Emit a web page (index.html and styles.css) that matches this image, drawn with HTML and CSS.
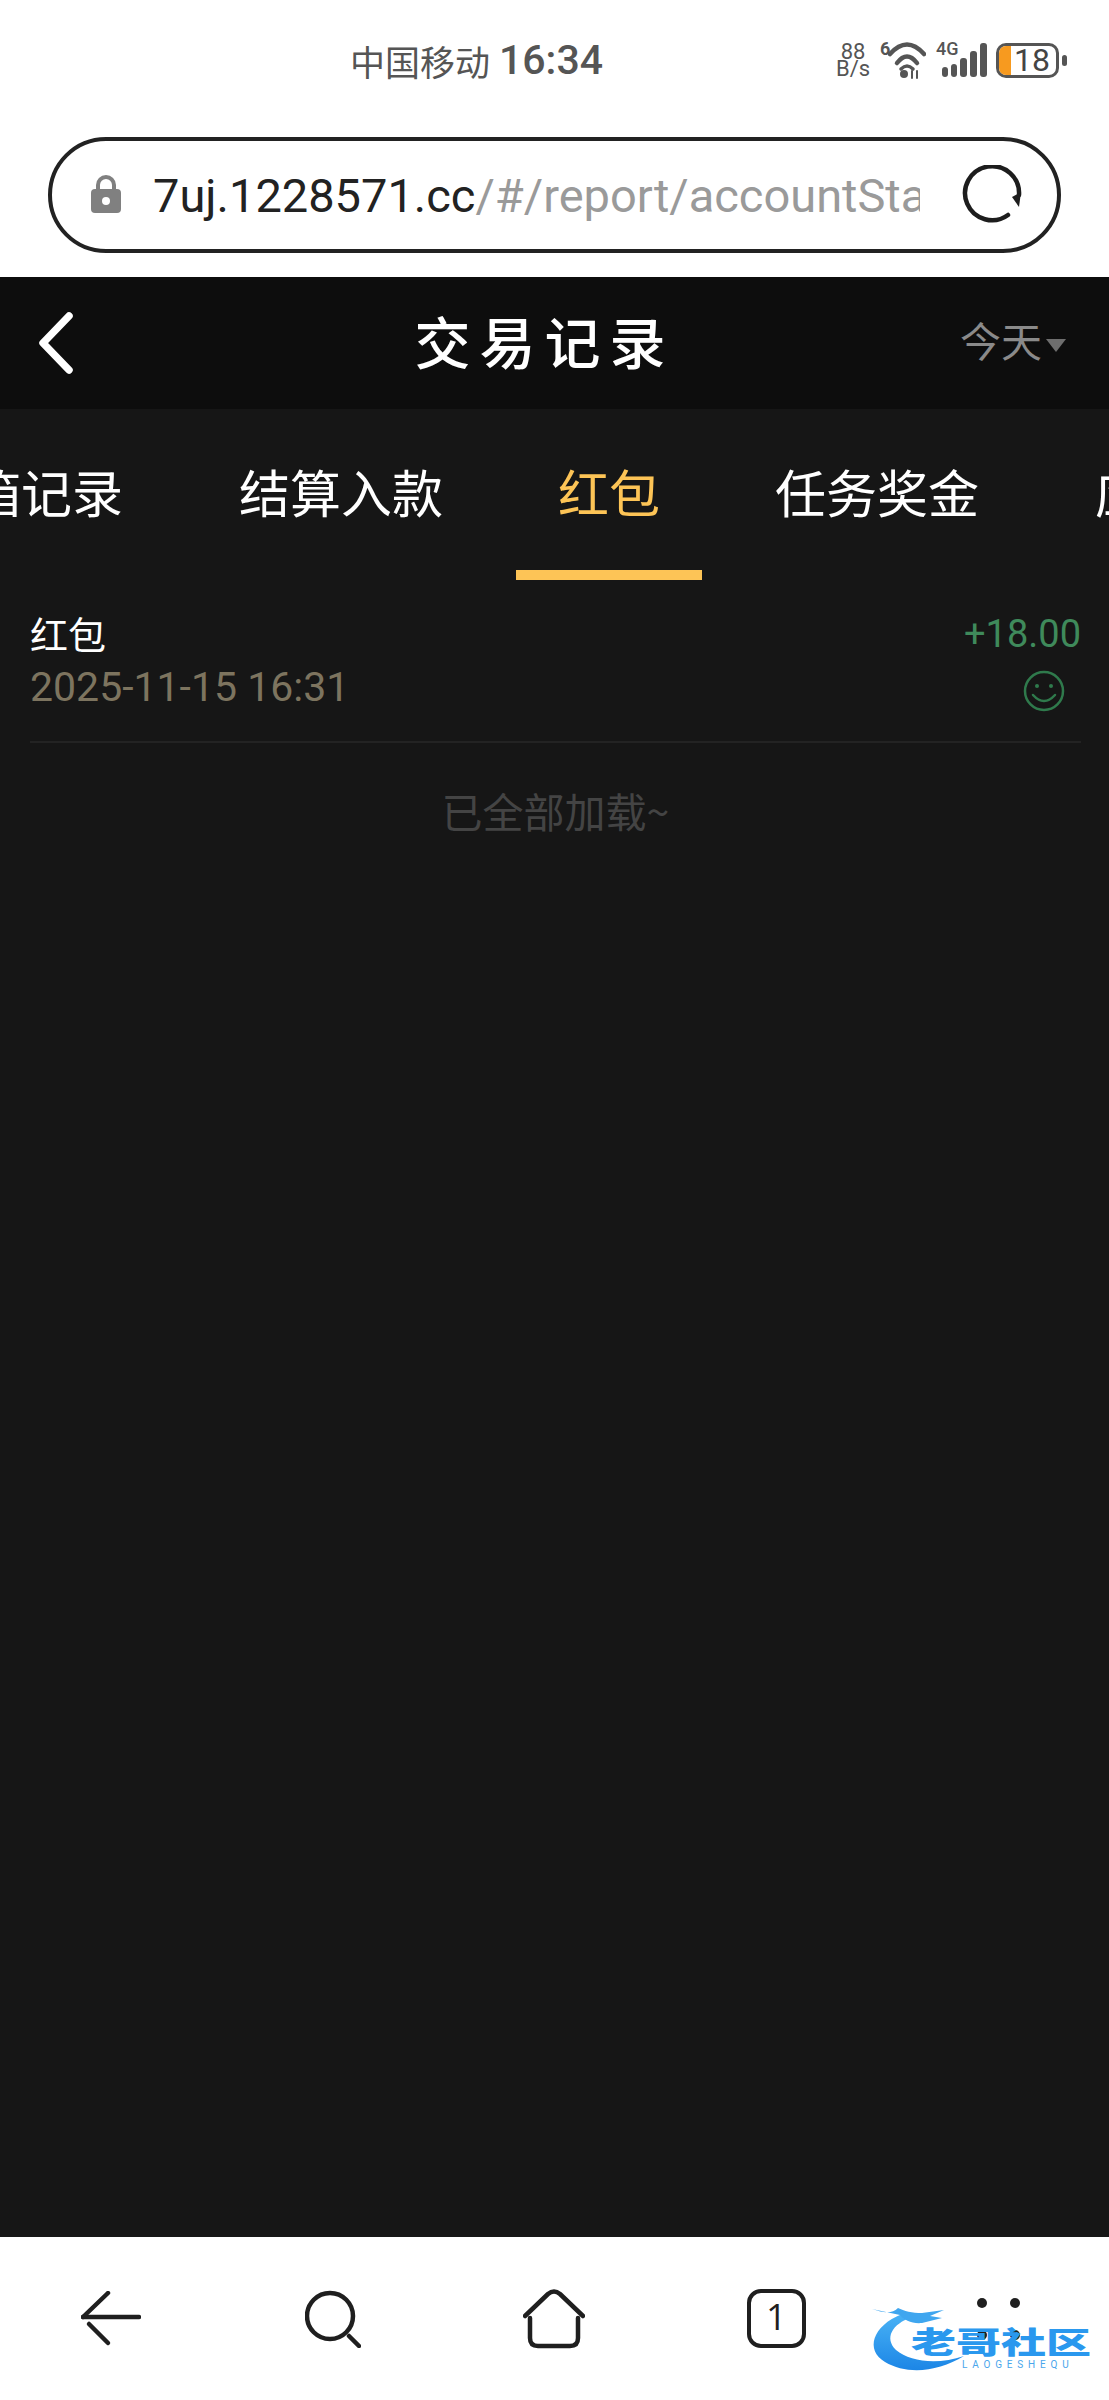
FILE: index.html
```html
<!DOCTYPE html>
<html lang="zh-CN">
<head>
<meta charset="utf-8">
<title>交易记录</title>
<link rel="stylesheet" href="styles.css">
</head>
<body>
<div class="page">
  <div class="browser-top">
    <div class="status">
      <span class="carrier">中国移动</span>
      <span class="clock">16:34</span>
      <div class="status-icons">
        <div class="speed"><span>88</span><span>B/s</span></div>
        <div class="wifi">
          <span class="wifi-six">6</span>
          <svg class="wifi-svg" width="38" height="38" viewBox="8 0 38 38" fill="none" stroke="#555" stroke-linecap="round">
            <path d="M10 13Q27 -6 44 13" stroke-width="4.5"/>
            <path d="M17 22Q27 9 37 22" stroke-width="4.5"/>
            <path d="M21 28Q27 22 33 28" stroke-width="3.5"/>
            <circle cx="24" cy="33" r="4" fill="#555" stroke="none"/>
            <path d="M32 30V37M37 30V37" stroke-width="2"/>
          </svg>
        </div>
        <div class="signal">
          <span class="signal-label">4G</span>
          <svg class="signal-svg" width="46" height="36" viewBox="0 0 46 36" fill="#555">
            <rect x="0" y="25" width="6" height="10" rx="3"/>
            <rect x="9" y="22" width="6" height="13" rx="3"/>
            <rect x="18" y="16" width="7" height="19" rx="3"/>
            <rect x="28" y="9" width="7" height="26" rx="3"/>
            <rect x="38" y="1" width="7" height="34" rx="3"/>
          </svg>
        </div>
        <div class="battery">
          <div class="battery-body"><span class="battery-fill"></span><span class="battery-num">18</span></div>
          <span class="battery-nub"></span>
        </div>
      </div>
    </div>
    <div class="url-pill">
      <svg class="lock" width="32" height="40" viewBox="0 0 32 40">
        <path d="M8 17V11a8 8 0 0 1 16 0v6" fill="none" stroke="#808080" stroke-width="4"/>
        <rect x="1" y="15" width="30" height="24" rx="4" fill="#808080"/>
        <circle cx="16" cy="27" r="4" fill="#fff"/>
      </svg>
      <div class="url-text"><span class="url-host">7uj.1228571.cc</span><span class="url-path">/#/report/accountStatus</span></div>
      <svg class="reload" width="60" height="60" viewBox="0 0 60 60" fill="none">
        <path d="M46 50A27 27 0 1 1 57 30" stroke="#1d1d1d" stroke-width="4.5" stroke-linecap="round"/>
        <path d="M50 32L59 27L57 42Z" fill="#1d1d1d"/>
      </svg>
    </div>
  </div>

  <header class="app-header">
    <div class="header-left">
      <svg width="36" height="62" viewBox="0 0 36 62" fill="none">
        <path d="M32 4L6 31L32 58" stroke="#fff" stroke-width="7.5" stroke-linecap="round" stroke-linejoin="round"/>
      </svg>
    </div>
    <h1 class="title">交易记录</h1>
    <div class="range"><span>今天</span><span class="range-caret"></span></div>
  </header>

  <nav class="tabs">
    <div class="tab tab-first">箱记录</div>
    <div class="tab">结算入款</div>
    <div class="tab tab-active">红包</div>
    <div class="tab">任务奖金</div>
    <div class="tab">应用</div>
  </nav>

  <main class="content">
    <div class="record">
      <div class="record-left">
        <div class="record-name">红包</div>
        <div class="record-date">2025-11-15 16:31</div>
      </div>
      <div class="record-right">
        <div class="record-amount">+18.00</div>
        <svg class="smile" width="42" height="42" viewBox="0 0 42 42" fill="none" stroke="#2f7a4c" stroke-width="2.5">
          <circle cx="21" cy="21" r="19"/>
          <path d="M10 25Q21 37 32 25" stroke-linecap="round"/>
          <circle cx="14" cy="16" r="2" fill="#2f7a4c" stroke="none"/>
          <circle cx="28" cy="16" r="2" fill="#2f7a4c" stroke="none"/>
        </svg>
      </div>
    </div>
    <div class="loaded">已全部加载~</div>
  </main>

  <footer class="toolbar">
    <div class="tool">
      <svg width="60" height="56" viewBox="0 0 60 56" fill="none" stroke="#1f1f1f" stroke-width="4.5" stroke-linecap="round">
        <path d="M2 26H58"/>
        <path d="M2 26L27 2"/>
        <path d="M8 33L27 52"/>
      </svg>
    </div>
    <div class="tool">
      <svg width="56" height="58" viewBox="0 0 56 58" fill="none" stroke="#1f1f1f" stroke-width="4.5" stroke-linecap="round">
        <circle cx="25" cy="26" r="23"/>
        <path d="M44 46L54 56"/>
      </svg>
    </div>
    <div class="tool">
      <svg width="62" height="60" viewBox="0 0 62 60" fill="none" stroke="#1f1f1f" stroke-width="4.5" stroke-linecap="round" stroke-linejoin="round">
        <path d="M2 27L25 5Q31 0 37 5L60 27"/>
        <path d="M7 29V49Q7 57 15 57H47Q55 57 55 49V29"/>
      </svg>
    </div>
    <div class="tool">
      <div class="tab-count">1</div>
    </div>
    <div class="tool">
      <div class="dots"><i></i><i></i><i></i><i></i></div>
    </div>
    <div class="logo">
      <svg class="logo-mark" width="240" height="95" viewBox="0 0 240 95">
        <defs>
          <linearGradient id="dragon" x1="0" y1="0" x2="0" y2="1">
            <stop offset="0" stop-color="#49b2f5"/>
            <stop offset="1" stop-color="#1c86e6"/>
          </linearGradient>
        </defs>
        <path d="M42 24C12 36 5 60 25 72C47 85 78 82 104 66C78 75 50 72 36 60C24 48 32 34 52 27Z" fill="url(#dragon)"/>
        <path d="M12 19C24 23 32 24 38 18C44 21 52 23 62 23L84 20L70 26L82 28L62 33C52 34 44 30 40 25Z" fill="#3fa6ef"/>
      </svg>
      <div class="logo-name">老哥社区</div>
      <div class="logo-sub">LAOGESHEQU</div>
    </div>
  </footer>
</div>
</body>
</html>
```

FILE: styles.css
```css
* { box-sizing: border-box; }
html, body { margin: 0; padding: 0; }
body { font-family: Roboto, "Noto Sans CJK SC", sans-serif; background: #161616; }
.page { width: 1109px; height: 2400px; display: flex; flex-direction: column; overflow: hidden; }

/* browser chrome */
.browser-top { height: 277px; background: #fff; padding: 0 48px; }
.status { height: 137px; margin: 0 -6px 0 302px; padding-bottom: 17px; display: flex; align-items: center; color: #555; }
.carrier { font-size: 35px; width: 149px; font-family: "Noto Sans CJK SC", sans-serif; }
.clock { font-size: 41px; font-weight: 500; }
.status-icons { margin-left: auto; display: flex; align-items: center; }
.speed { width: 34px; display: flex; flex-direction: column; align-items: center; font-size: 22px; line-height: 17px; margin-right: 10px; }
.wifi { position: relative; width: 46px; height: 38px; margin-right: 10px; }
.wifi-six { position: absolute; left: 0; top: -2px; font-size: 18px; font-weight: 700; line-height: 20px; }
.wifi-svg { position: absolute; right: 0; top: 0; }
.signal { position: relative; width: 50px; height: 38px; margin-right: 10px; }
.signal-label { position: absolute; left: 0; top: -2px; font-size: 18px; font-weight: 500; line-height: 20px; }
.signal-svg { position: absolute; left: 6px; top: 1px; }
.battery { display: flex; align-items: center; }
.battery-body { position: relative; width: 63px; height: 35px; border: 3px solid #555; border-radius: 10px; overflow: hidden; display: flex; align-items: center; padding-left: 15px; }
.battery-fill { position: absolute; left: 0; top: 0; bottom: 0; width: 12px; background: #f79a1f; }
.battery-num { font-size: 32px; line-height: 29px; color: #444; }
.battery-nub { width: 5px; height: 11px; background: #555; border-radius: 3px; margin-left: 3px; }

.url-pill { height: 116px; border: 4px solid #222; border-radius: 58px; display: flex; align-items: center; padding: 0 35px 0 38px; }
.lock { flex: none; margin-top: -2px; }
.url-text { width: 768px; margin-left: 31px; margin-right: 42px; padding-top: 2px; font-size: 47px; white-space: nowrap; overflow: hidden; line-height: 66px; }
.url-host { color: #222; }
.url-path { color: #9a9a9a; }
.reload { flex: none; margin-left: auto; }

/* app header */
.app-header { height: 132px; background: #0d0d0d; display: grid; grid-template-columns: 1fr auto 1fr; align-items: center; padding: 0 43px 0 37px; }
.header-left { display: flex; align-items: center; }
.title { margin: 0 14px 6px 0; font-size: 56px; font-weight: 500; letter-spacing: 9px; color: #fff; line-height: 70px; font-family: "Noto Sans CJK SC", sans-serif; }
.range { justify-self: end; display: flex; align-items: center; gap: 4px; color: #8a8a8a; font-size: 41px; line-height: 60px; margin-bottom: 9px; font-family: "Noto Sans CJK SC", sans-serif; }
.range-caret { width: 0; height: 0; border-left: 10px solid transparent; border-right: 10px solid transparent; border-top: 13px solid #6e6e6e; margin-top: 14px; }

/* tabs */
.tabs { height: 171px; display: flex; margin-left: -30px; white-space: nowrap; background: #161616; font-family: "Noto Sans CJK SC", sans-serif; }
.tab { flex: none; position: relative; padding: 0 58px; font-size: 51px; line-height: 165px; color: #fff; }
.tab-first { padding-left: 0; }
.tab-active { color: #fdc456; }
.tab-active::after { content: ""; position: absolute; left: 0; right: 0; bottom: 0; height: 10px; background: #fdc456; }
.tab-active { padding: 0 42px; margin: 0 15px; }

/* list */
.content { flex: 1; background: #161616; padding: 0 28px 0 30px; }
.record { display: flex; justify-content: space-between; padding: 26px 0 25px; border-bottom: 2px solid #232323; }
.record-name { font-size: 38px; line-height: 53px; color: #fff; font-family: "Noto Sans CJK SC", sans-serif; }
.record-date { font-size: 41px; line-height: 57px; color: #7d745f; }
.record-right { display: flex; flex-direction: column; align-items: flex-end; }
.record-amount { font-size: 38px; line-height: 57px; color: #3f8a5b; }
.smile { margin: 7px 16px 0 0; }
.loaded { padding-top: 37px; line-height: 60px; text-align: center; font-size: 41px; color: #444; font-family: "Noto Sans CJK SC", sans-serif; }

/* toolbar */
.toolbar { position: relative; height: 163px; background: #fff; display: grid; grid-template-columns: repeat(5, 1fr); align-items: center; }
.tool { display: flex; justify-content: center; align-items: center; }
.tab-count { width: 59px; height: 59px; border: 4.5px solid #1f1f1f; border-radius: 14px; font-size: 36px; line-height: 48px; text-align: center; color: #1f1f1f; font-family: "Open Sans", sans-serif; }
.dots { display: grid; grid-template-columns: 10px 10px; gap: 22px 23px; }
.dots i { width: 10px; height: 10px; border-radius: 50%; background: #1f1f1f; }

/* watermark over the toolbar */
.logo { position: absolute; left: 860px; top: 53px; width: 240px; height: 95px; padding: 32px 0 0 51px; }
.logo-mark { position: absolute; left: 0; top: 0; }
.logo-name { position: relative; width: 185px; font-size: 45px; line-height: 37px; font-weight: 900; white-space: nowrap; color: #2a98ee; transform: scaleY(0.66); font-family: "Noto Sans CJK SC", sans-serif; }
.logo-sub { position: relative; padding-left: 51px; font-size: 10px; line-height: 12px; letter-spacing: 4.8px; color: #4aa6ec; font-family: Roboto, sans-serif; white-space: nowrap; }
```
